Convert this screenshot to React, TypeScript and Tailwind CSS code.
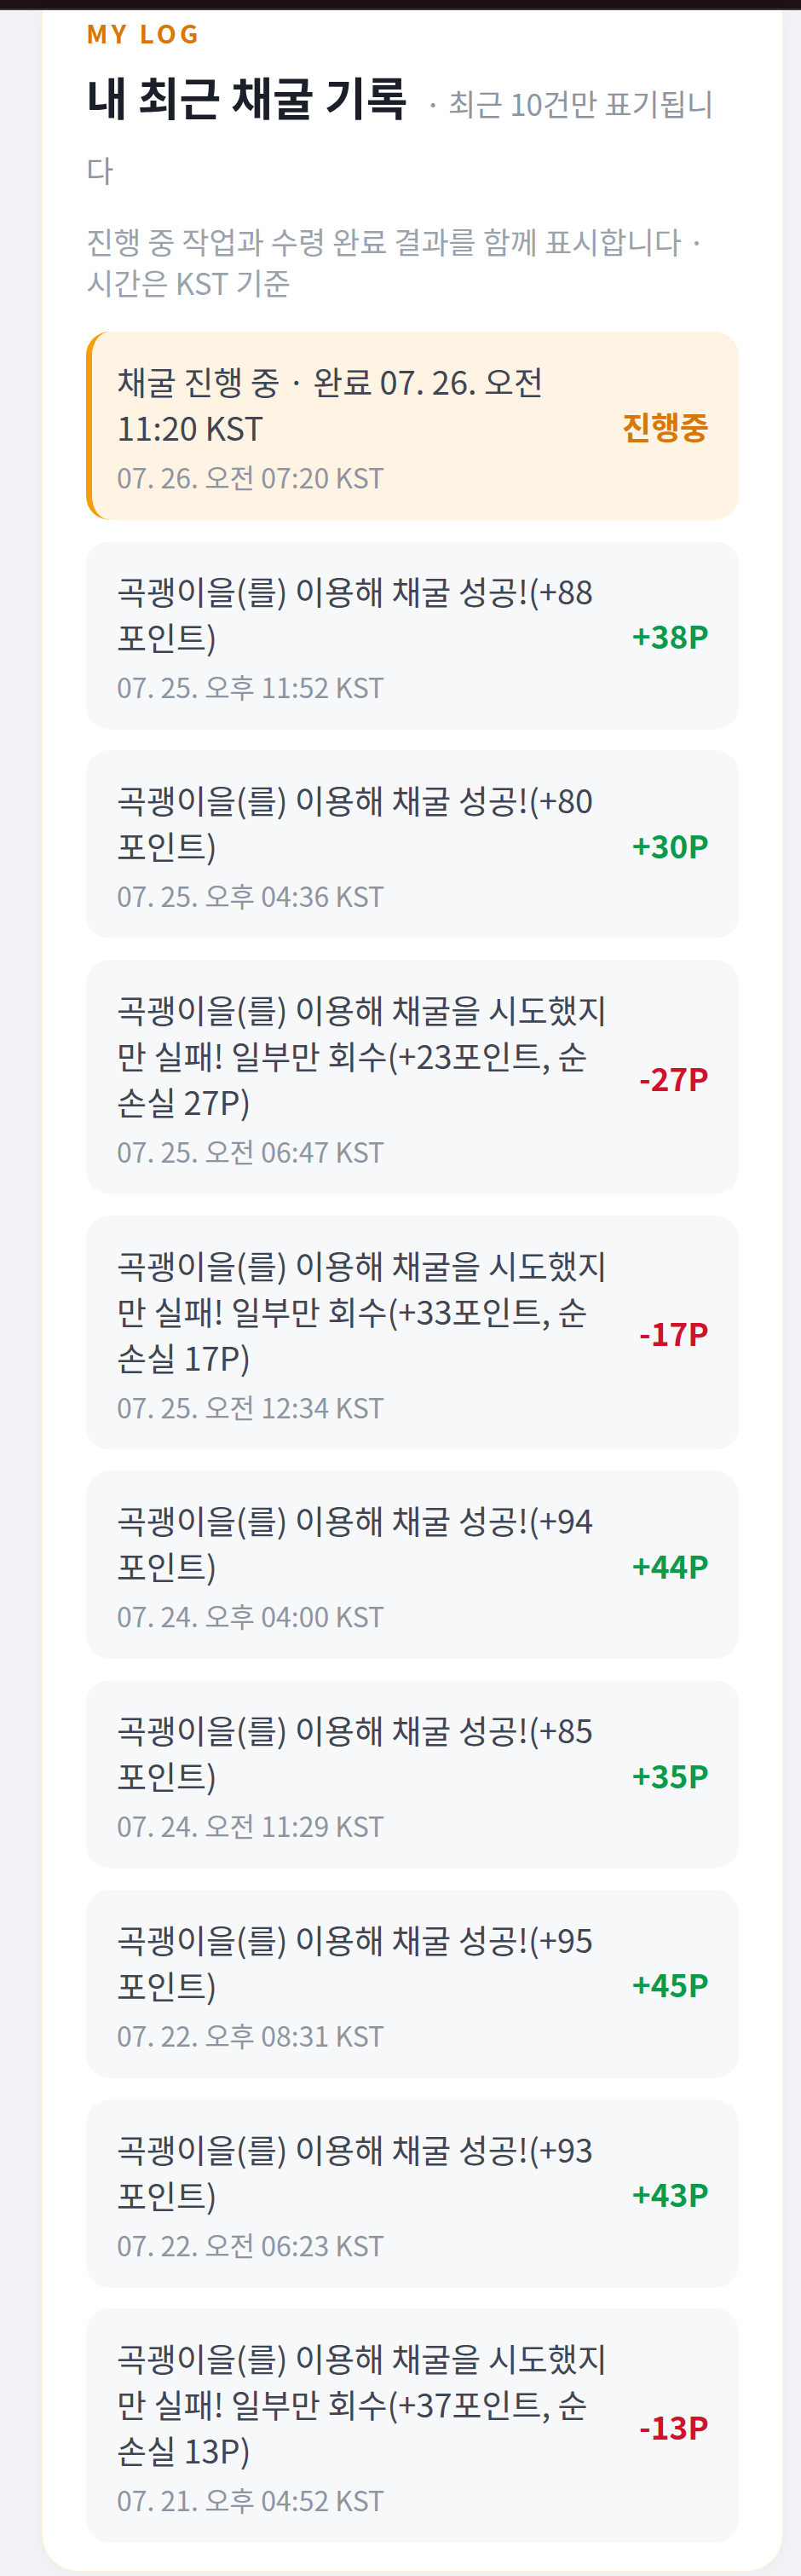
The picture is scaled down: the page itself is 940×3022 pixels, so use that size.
import React from 'react'

type LogItem = {
  text: string
  time: string
  points: string
  kind: 'pending' | 'gain' | 'loss'
}

const logs: LogItem[] = [
  { text: '채굴 진행 중 · 완료 07. 26. 오전 11:20 KST', time: '07. 26. 오전 07:20 KST', points: '진행중', kind: 'pending' },
  { text: '곡괭이을(를) 이용해 채굴 성공!(+88포인트)', time: '07. 25. 오후 11:52 KST', points: '+38P', kind: 'gain' },
  { text: '곡괭이을(를) 이용해 채굴 성공!(+80포인트)', time: '07. 25. 오후 04:36 KST', points: '+30P', kind: 'gain' },
  { text: '곡괭이을(를) 이용해 채굴을 시도했지만 실패! 일부만 회수(+23포인트, 순손실 27P)', time: '07. 25. 오전 06:47 KST', points: '-27P', kind: 'loss' },
  { text: '곡괭이을(를) 이용해 채굴을 시도했지만 실패! 일부만 회수(+33포인트, 순손실 17P)', time: '07. 25. 오전 12:34 KST', points: '-17P', kind: 'loss' },
  { text: '곡괭이을(를) 이용해 채굴 성공!(+94포인트)', time: '07. 24. 오후 04:00 KST', points: '+44P', kind: 'gain' },
  { text: '곡괭이을(를) 이용해 채굴 성공!(+85포인트)', time: '07. 24. 오전 11:29 KST', points: '+35P', kind: 'gain' },
  { text: '곡괭이을(를) 이용해 채굴 성공!(+95포인트)', time: '07. 22. 오후 08:31 KST', points: '+45P', kind: 'gain' },
  { text: '곡괭이을(를) 이용해 채굴 성공!(+93포인트)', time: '07. 22. 오전 06:23 KST', points: '+43P', kind: 'gain' },
  { text: '곡괭이을(를) 이용해 채굴을 시도했지만 실패! 일부만 회수(+37포인트, 순손실 13P)', time: '07. 21. 오후 04:52 KST', points: '-13P', kind: 'loss' },
]

const LogRow: React.FC<{ item: LogItem }> = ({ item }) => {
  const pending = item.kind === 'pending'
  return (
    <li
      className={`flex items-center rounded-[28px] py-[31px] pr-[35px] ${
        pending ? 'bg-[#fff4e4] border-l-[7px] border-[#f59e0b] pl-[29px]' : 'bg-[#f7f8fa] pl-[36px]'
      }`}
    >
      <div className="w-[585px] shrink-0">
        <p className="text-[38px] leading-[54px] text-[#3f4552]">{item.text}</p>
        <p className="mt-[11px] text-[32px] leading-[40px] text-[#8d95a2]">{item.time}</p>
      </div>
      <span
        className={`ml-auto shrink-0 text-[37px] font-bold leading-[54px] ${
          item.kind === 'pending' ? 'text-[#d97706]' : item.kind === 'gain' ? 'text-[#0a9a4c]' : 'text-[#d0112b]'
        }`}
      >
        {item.points}
      </span>
    </li>
  )
}

export default function App() {
  return (
    <div className="min-h-screen bg-[#f1f3f6] font-['Noto_Sans_CJK_KR','Noto_Sans',sans-serif]">
      <div className="h-[12px] bg-[#1c1216] border-b-2 border-[#3e3639]" />

      <div className="ml-[48px] mr-[20px] rounded-b-[44px] border-x-2 border-b-2 border-[#fbefdf] bg-white px-[51px] pt-[6px] pb-[33px] shadow-[0_0_20px_rgba(15,23,42,0.04)]">
        {/* Header */}
        <p className="text-[30px] font-bold leading-[40px] tracking-[0.14em] text-[#d97706]">MY LOG</p>
        <h2 className="mt-[16px] text-[53px] font-bold leading-[78px] text-[#1b1f29]">
          내 최근 채굴 기록
          <span className="ml-[20px] text-[35px] font-normal leading-none text-[#8d95a2]">· 최근 10건만 표기됩니다</span>
        </h2>
        <p className="mt-[29px] text-[35px] leading-[48px] text-[#9aa2ad]">
          진행 중 작업과 수령 완료 결과를 함께 표시합니다 · 시간은 KST 기준
        </p>

        {/* Log list */}
        <ul className="mt-[34px] flex flex-col gap-[24.7px]">
          {logs.map((item, i) => (
            <LogRow key={i} item={item} />
          ))}
        </ul>
      </div>
    </div>
  )
}
